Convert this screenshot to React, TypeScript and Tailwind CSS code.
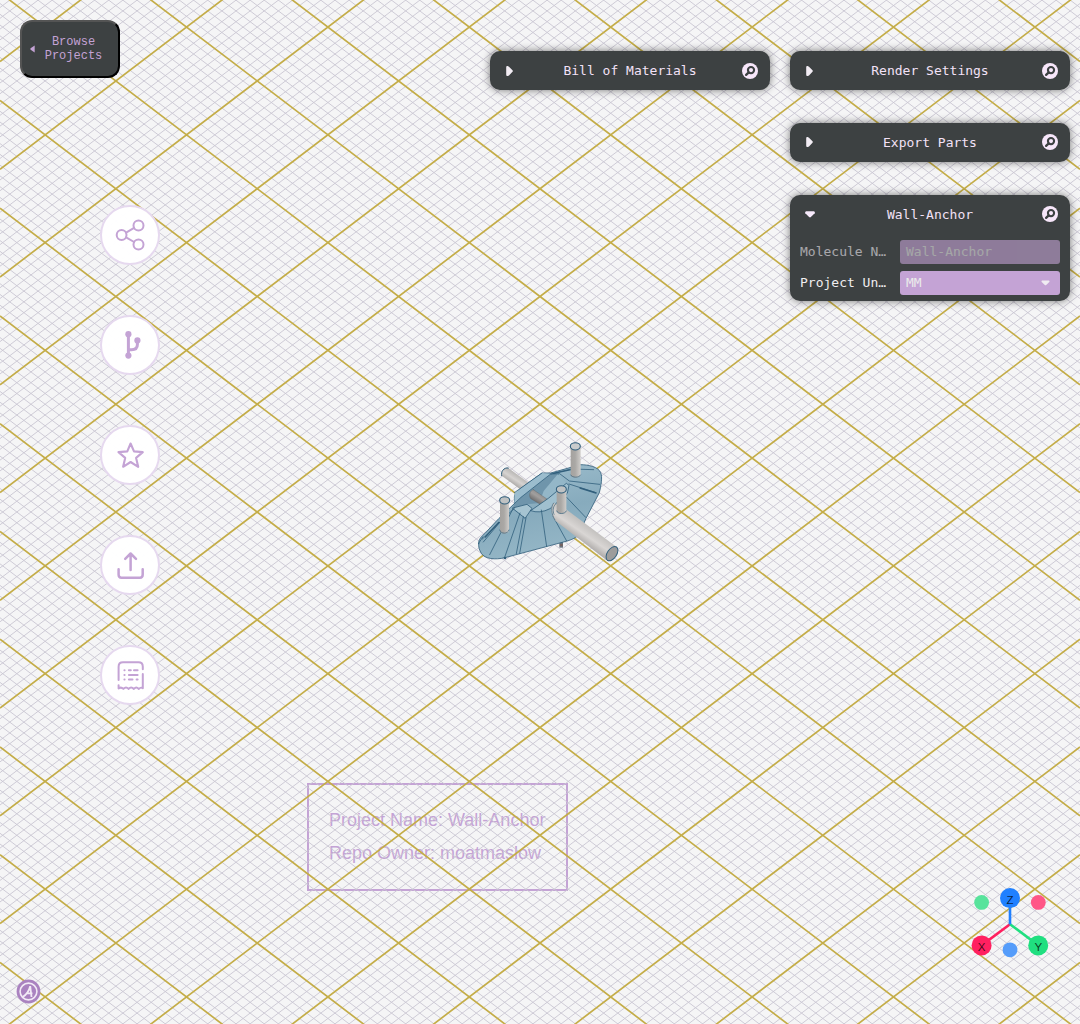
import React from "react";

const HALF_X = 70.7;
const HALF_Y = 53.88;
const CX = 540;
const CY = 512;

function gridPath(divisions: number, skipMajor: boolean) {
  const parts: string[] = [];
  const slope = HALF_Y / HALF_X;
  const step = (HALF_Y * 2) / divisions;
  const count = 10 * divisions;
  for (let i = -count; i <= count; i++) {
    if (skipMajor && i % divisions === 0) continue;
    const c = CY + i * step;
    const d = slope * CX;
    parts.push(`M0 ${(c - d).toFixed(2)}L1080 ${(c + d).toFixed(2)}`);
    parts.push(`M0 ${(c + d).toFixed(2)}L1080 ${(c - d).toFixed(2)}`);
  }
  return parts.join("");
}

const minorGrid = gridPath(10, true);
const majorGrid = gridPath(1, false);

function Grid() {
  return (
    <svg className="absolute inset-0" width="1080" height="1024" fill="none">
      <path d={minorGrid} stroke="#c9c6d3" strokeWidth="0.9" />
      <path d={majorGrid} stroke="#c4ad48" strokeWidth="1.7" />
    </svg>
  );
}

function Model() {
  return (
    <svg className="absolute left-[465px] top-[430px]" width="170" height="145" viewBox="0 0 510 435" strokeLinejoin="round" strokeLinecap="round">
      <defs>
        <linearGradient id="rod" x1="0" x2="1">
          <stop offset="0" stopColor="#a5a29f" />
          <stop offset="0.45" stopColor="#aaa8a5" />
          <stop offset="1" stopColor="#d0cdca" />
        </linearGradient>
        <linearGradient id="backRod" gradientUnits="userSpaceOnUse" x1="176" y1="145" x2="158" y2="173">
          <stop offset="0" stopColor="#b9b7b5" />
          <stop offset="0.5" stopColor="#d6d3d1" />
          <stop offset="1" stopColor="#aba8a6" />
        </linearGradient>
        <linearGradient id="innerRod" gradientUnits="userSpaceOnUse" x1="226" y1="186" x2="209" y2="212">
          <stop offset="0" stopColor="#8c8b8b" />
          <stop offset="0.5" stopColor="#a19f9e" />
          <stop offset="1" stopColor="#747373" />
        </linearGradient>
        <linearGradient id="longRod" gradientUnits="userSpaceOnUse" x1="372" y1="288" x2="340" y2="334">
          <stop offset="0" stopColor="#c2c0be" />
          <stop offset="0.5" stopColor="#d9d6d4" />
          <stop offset="1" stopColor="#a9a6a4" />
        </linearGradient>
        <linearGradient id="body" x1="0" y1="0" x2="0.3" y2="1">
          <stop offset="0" stopColor="#a0c0cf" />
          <stop offset="0.6" stopColor="#87abbd" />
          <stop offset="1" stopColor="#94b6c6" />
        </linearGradient>
      </defs>
      <path d="M110 137L205 207L225 183L130 114C117 110 106 126 110 137Z" fill="url(#backRod)" />
      <path d="M110 137C107 126 116 111 130 114" fill="none" stroke="#315f7c" strokeWidth="3" />
      <path d="M283 335H294V353H283Z" fill="#68717c" />
      <path d="M41 340C40 329 49 319 61 309L101 266L149 220L148 201C149 189 155 187 165 177L231 129H257L318 112L345 104C372 104 400 111 407 128C413 141 408 168 403 188L363 265L344 309C337 323 318 330 303 334L120 383C91 390 59 387 49 370C43 360 40 351 41 340Z" fill="url(#body)" stroke="#315f7c" strokeWidth="2.5" />
      <path d="M148 221L168 202L257 132L284 131L240 190L224 219L186 223L143 234Z" fill="#6f95ab" />
      <path d="M278 133L305 160L250 203L224 215L236 183Z" fill="#94b7c8" />
      <path d="M149 188L231 129L257 132L168 202L148 221Z" fill="#9bbdce" />
      <path d="M205 179L246 207L231 226L197 206C190 196 195 181 205 179Z" fill="url(#innerRod)" stroke="#5b5d61" strokeWidth="1" />
      <path d="M143 234L186 223L201 235L181 264Z" fill="#a6c4d1" stroke="#315f7c" strokeWidth="2.5" />
      <path d="M197 242L250 205L304 160L312 166L307 190L255 236Q224 252 197 242Z" fill="#a0c0cf" stroke="#315f7c" strokeWidth="2.5" />
      <g fill="none" stroke="#315f7c" strokeWidth="2.4">
        <path d="M148 188L231 129M148 221L168 202L257 132L318 117L386 119M257 132L284 131L313 153L404 163M312 162L393 188M305 202L362 262M149 234L52 327M127 250L55 336M144 236L74 374M165 249L119 382M175 260L154 371M183 263L164 370M229 240L245 350M263 257L305 333M41 340L54 320" />
        <path d="M266 130L318 119M345 174L393 189" strokeWidth="4" />
      </g>
      <path d="M61 321L101 277" stroke="#315f7c" strokeWidth="4" />
      <path d="M266 218C256 228 256 255 271 272L425 391C442 398 459 375 458 353L302 237Z" fill="url(#longRod)" />
      <path d="M266 219C257 229 258 252 270 270M271 223C263 231 263 244 267 253" stroke="#4f7287" strokeWidth="2.5" fill="none" />
      <ellipse cx="441" cy="371" rx="14" ry="24" transform="rotate(34 441 371)" fill="#9c9c9c" stroke="#315f7c" strokeWidth="3" />
      <path d="M317 49V135C317 146 346 146 347 135V49Z" fill="url(#rod)" />
      <path d="M317 135C321 144 343 144 347 135" fill="none" stroke="#315f7c" strokeWidth="2" />
      <ellipse cx="331" cy="49" rx="15" ry="11" fill="#c9cccd" stroke="#315f7c" strokeWidth="3.2" />
      <path d="M105 211V303C108 314 129 313 132 303V211Z" fill="url(#rod)" />
      <path d="M104 300C107 313 129 313 132 300" fill="none" stroke="#315f7c" strokeWidth="2" />
      <ellipse cx="119" cy="211" rx="15" ry="11" fill="#bfc2c3" stroke="#315f7c" strokeWidth="3.2" />
      <path d="M275 179V243C278 254 301 253 304 243V179Z" fill="url(#rod)" />
      <path d="M275 243C278 254 301 253 304 243" fill="none" stroke="#315f7c" strokeWidth="2" />
      <ellipse cx="289" cy="178" rx="15" ry="11" fill="#bfc2c3" stroke="#315f7c" strokeWidth="3.2" />
      <ellipse cx="289" cy="345" rx="5" ry="3" fill="#78605c" />
      <circle cx="120" cy="384" r="4" fill="#315f7c" />
    </svg>
  );
}

const icons = [
  <g key="share" strokeWidth="2">
    <circle cx="11.6" cy="20" r="4.9" />
    <circle cx="28.5" cy="10.4" r="5" />
    <circle cx="28.5" cy="29.4" r="5" />
    <path d="M16.1 17.6L24.1 12.9M16.1 22.3L24.1 27" />
  </g>,
  <g key="branch" strokeWidth="3">
    <path d="M18.4 9V31M18.4 24.8H21.5C26 24.8 27.4 22.5 27.4 19.5V15.5" />
    <g stroke="none" fill="#c4a3d5">
      <circle cx="18.4" cy="9.2" r="3.1" />
      <circle cx="18.4" cy="30.6" r="3.1" />
      <circle cx="27.4" cy="15.4" r="3.1" />
    </g>
  </g>,
  <path key="star" strokeWidth="2.1" d="M20.6 8.5L17.3 16.4L8.5 17.1L15.2 22.9L13.1 31.8L20.6 27L28.2 31.8L26.1 22.9L32.8 17.1L24 16.4Z" />,
  <g key="upload" strokeWidth="2.5">
    <path d="M20.6 25V8.7M15.2 13.9L20.6 8.5L26 13.9M8.6 24.2V29.5C8.6 31.8 9.4 32.7 11.4 32.7H30C32 32.7 32.7 31.8 32.7 29.5V24.2" />
  </g>,
  <g key="receipt" strokeWidth="2">
    <path d="M8.6 25V11.7Q8.6 7.3 13 7.3H28.5Q32.8 7.3 32.8 11.7V14.2M32.8 19V33.2C31 32 30.5 32.2 28.9 33.9C26.7 31.9 25.7 31.9 23.9 33.9C21.7 31.9 20.5 31.9 18.6 33.9C16.6 31.9 15.4 31.9 13.4 33.9C11.5 32 10.5 32 8.6 33.4V30.2" />
    <path d="M14.4 15.2H14.6M18.9 15.2H20.8M24 15.2H27.6M14.4 19.9H14.6M18.9 19.9H27.6M14.4 24.6H14.6M18.9 24.6H22.5M26.6 24.6H27.6" />
  </g>,
];

function SearchBadge() {
  return (
    <svg width="16" height="16" viewBox="0 0 16 16">
      <circle cx="8" cy="8" r="8" fill="#f7e6fa" />
      <circle cx="9" cy="7.1" r="3.1" fill="none" stroke="#3d4142" strokeWidth="2.1" />
      <path d="M6.5 9.6L4.1 11.9" stroke="#3d4142" strokeWidth="2.3" strokeLinecap="round" />
    </svg>
  );
}

function Panel({ title, open, raised, children }: { title: string; open?: boolean; raised?: boolean; children?: React.ReactNode }) {
  return (
    <section className="w-[280px] rounded-[10px] bg-[#3d4142] shadow-[0_0_9px_0_#00000088]">
      <header className={raised ? "flex h-[39px] items-center px-3 [&>svg]:mb-0.5" : "flex h-[39px] items-center px-3"}>
        {open ? (
          <svg width="16" height="16" viewBox="0 0 16 16">
            <path d="M4.2 5.2H11.8Q13.6 5.6 12.7 7.3L8.9 11.1Q8 11.8 7.1 11.1L3.3 7.3Q2.4 5.6 4.2 5.2Z" fill="#f7e9fb" />
          </svg>
        ) : (
          <svg width="16" height="16" viewBox="0 0 16 16">
            <path d="M4.2 4.3Q4.2 2.5 5.7 3L7 3.7L10.5 7.2Q11.3 8 10.5 8.8L7 12.4Q4.2 14 4.2 11.7Z" fill="#f3edf4" />
          </svg>
        )}
        <h2 className="flex-1 text-center text-[13px] leading-5 text-[#f3e1f7]">{title}</h2>
        <SearchBadge />
      </header>
      {children}
    </section>
  );
}

function Gizmo() {
  return (
    <svg className="absolute left-[960px] top-[880px]" width="100" height="90">
      <circle cx="21.6" cy="22.4" r="7.4" fill="#58e39c" />
      <circle cx="78.3" cy="22.4" r="7.4" fill="#ff5687" />
      <circle cx="50" cy="69.8" r="7.4" fill="#559cfa" />
      <g strokeWidth="2.6">
        <path d="M50 44.2L21.6 65.4" stroke="#ff2060" />
        <path d="M50 44.2L78.3 65.4" stroke="#20df80" />
        <path d="M50 44.4V18" stroke="#2080ff" />
      </g>
      <circle cx="21.6" cy="65.4" r="10" fill="#ff2060" />
      <circle cx="78.2" cy="65.4" r="10" fill="#20df80" />
      <circle cx="50" cy="18.1" r="10" fill="#2080ff" />
      <g className="font-['Liberation_Sans']" fontSize="11.5" textAnchor="middle" fill="#000000" fillOpacity="0.75">
        <text x="21.7" y="71">X</text>
        <text x="78.4" y="71">Y</text>
        <text x="50" y="24">Z</text>
      </g>
    </svg>
  );
}

export default function App() {
  return (
    <main className="relative h-[1024px] w-[1080px] overflow-hidden bg-[#f5f5f6] font-['DejaVu_Sans_Mono',monospace]">
      <div className="absolute left-[307px] top-[783px] flex h-[108px] w-[261px] flex-col border-2 border-[#c4a3d5] px-5 pt-[19px] font-['Liberation_Sans',sans-serif] text-[18px] leading-[33px] text-[#c4a3d5]">
        <p className="whitespace-nowrap">Project Name: Wall-Anchor</p>
        <p className="whitespace-nowrap">Repo Owner: moatmaslow</p>
      </div>
      <Grid />
      <Model />

      <button className="absolute left-5 top-5 flex h-[58px] w-[100px] items-center rounded-[12px] border-2 border-black bg-[#3d4142] pl-[7.5px] font-['Liberation_Mono',monospace] text-[12px] leading-[14px] text-[#c4a3d5] [border-style:outset]">
        <svg width="5" height="8" viewBox="0 0 5 8">
          <path d="M4.7 .6V7.4L.6 4.7Q0 4 .6 3.3Z" fill="#c4a3d5" />
        </svg>
        <span className="ml-[9px] w-[60px] text-center">Browse Projects</span>
      </button>

      <nav className="absolute left-[100px] top-[205px] flex flex-col gap-[50px]">
        {icons.map((icon, i) => (
          <button key={i} className="flex size-[60px] items-center justify-center rounded-full border-2 border-[#e6d9ef] bg-white/98">
            <svg width="40" height="40" viewBox="0 0 40 40" fill="none" stroke="#c4a3d5" strokeLinecap="round" strokeLinejoin="round">
              {icon}
            </svg>
          </button>
        ))}
      </nav>

      <div className="absolute right-[10px] top-[51px] flex items-start gap-5">
        <Panel title="Bill of Materials" />
        <div className="flex flex-col gap-[33px]">
          <Panel title="Render Settings" />
          <Panel title="Export Parts" raised />
          <Panel title="Wall-Anchor" open raised>
            <div className="flex flex-col gap-[7px] px-[10px] pb-[6px] pt-[6px] text-[13px] leading-6">
              <div className="flex opacity-60">
                <span className="w-[100px] text-[#f0ecf2]">Molecule N…</span>
                <span className="h-6 flex-1 rounded-[3px] bg-[#c4a3d5] px-1.5 text-[#ebebeb]">Wall-Anchor</span>
              </div>
              <div className="flex">
                <span className="w-[100px] text-[#f0eef0]">Project Un…</span>
                <span className="flex h-6 flex-1 items-center justify-between rounded-[3px] bg-[#c4a3d5] pl-1.5 pr-[10px] text-[#ebebeb]">
                  MM
                  <svg className="-mt-px" width="9" height="6" viewBox="0 0 9 6">
                    <path d="M1 .4H8Q9 1 8.3 2L5.2 5Q4.5 5.5 3.8 5L.7 2Q0 1 1 .4Z" fill="#f0ecf2" />
                  </svg>
                </span>
              </div>
            </div>
          </Panel>
        </div>
      </div>

      <Gizmo />

      <svg className="absolute left-4 top-[979px]" width="25" height="25" viewBox="0 0 25 25" fill="none">
        <circle cx="12.5" cy="12.5" r="11.9" fill="#aa82c0" />
        <circle cx="12.5" cy="12.5" r="8.4" stroke="#f2eaf6" strokeWidth="1.6" />
        <path d="M6.8 18Q12.5 14 14.2 7.2L15.5 18M10 14.3H16.5" stroke="#f2eaf6" strokeWidth="1.8" />
      </svg>
    </main>
  );
}
